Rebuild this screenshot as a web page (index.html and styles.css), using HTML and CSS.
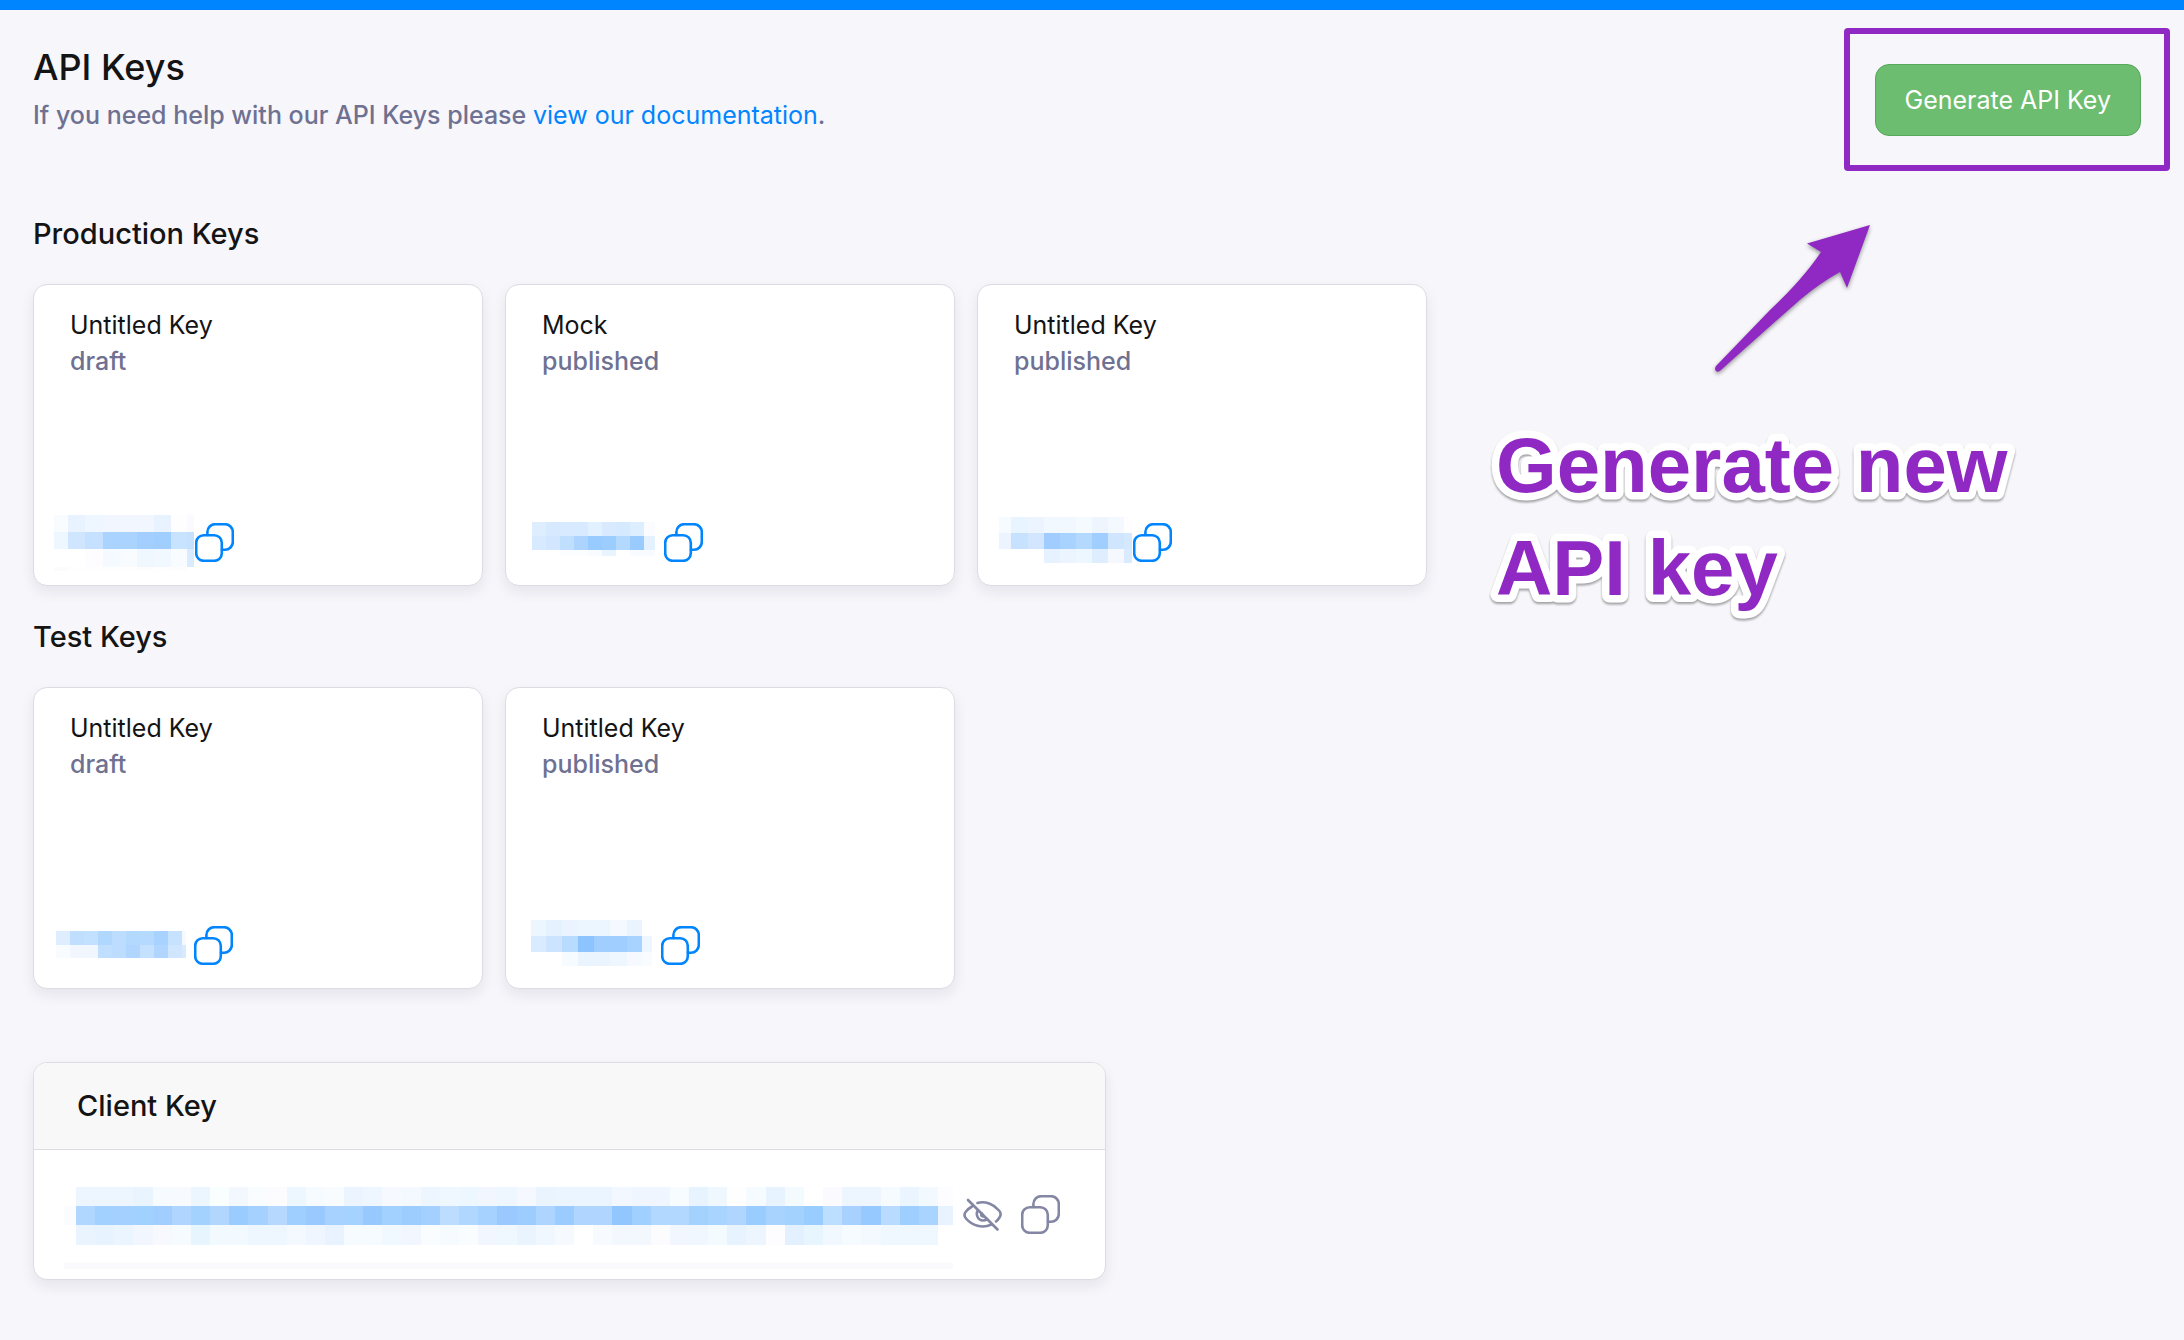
FILE: index.html
```html
<!DOCTYPE html>
<html lang="en">
<head>
    <meta charset="UTF-8">
    <meta name="viewport" content="width=device-width, initial-scale=1.0">
    <title>API Keys</title>
    <link rel="stylesheet" href="styles.css">
</head>
<body>
    <!-- copy icon, used by every key -->
    <svg class="sprite" aria-hidden="true">
        <symbol id="copy" viewBox="0 0 39 39">
            <rect x="1.2" y="12.2" width="25.6" height="25.6" rx="7.5"/>
            <path d="M12.4 12V9a7.8 7.8 0 0 1 7.8-7.8H30A7.8 7.8 0 0 1 37.8 9v10a7.8 7.8 0 0 1-7.8 7.8h-3"/>
        </symbol>
    </svg>

    <main class="page">
        <header class="header">
            <div>
                <h1>API Keys</h1>
                <p class="help">If you need help with our API Keys please <a href="#">view our documentation</a>.</p>
            </div>
            <div class="generate">
                <button class="btn" type="button">Generate API Key</button>
                <svg class="arrow" viewBox="0 0 190 175" aria-hidden="true">
                    <path d="M170 15L107 33.500L121 42Q103 69 70 100L16 156Q14 159 16 161Q18 163 21 160Q77 110 101 89Q120 73 140 62L147 78Z"/>
                </svg>
                <svg class="callout" viewBox="0 0 540 220">
                    <text x="12" y="82">Generate new</text>
                    <text x="12" y="185">API key</text>
                </svg>
            </div>
        </header>

        <h2>Production Keys</h2>
        <div class="cards">
            <div class="card">
                <div>
                    <h3>Untitled Key</h3>
                    <p>draft</p>
                </div>
                <div class="key">
                    <svg class="mask" data-key="prod1" width="145" height="65" role="img" aria-label="Hidden key"></svg>
                    <button class="icon" type="button" aria-label="Copy key"><svg><use href="#copy"/></svg></button>
                </div>
            </div>
            <div class="card">
                <div>
                    <h3>Mock</h3>
                    <p>published</p>
                </div>
                <div class="key">
                    <svg class="mask" data-key="prod2" width="142" height="65" role="img" aria-label="Hidden key"></svg>
                    <button class="icon" type="button" aria-label="Copy key"><svg><use href="#copy"/></svg></button>
                </div>
            </div>
            <div class="card">
                <div>
                    <h3>Untitled Key</h3>
                    <p>published</p>
                </div>
                <div class="key">
                    <svg class="mask" data-key="prod3" width="139" height="65" role="img" aria-label="Hidden key"></svg>
                    <button class="icon" type="button" aria-label="Copy key"><svg><use href="#copy"/></svg></button>
                </div>
            </div>
        </div>

        <h2>Test Keys</h2>
        <div class="cards">
            <div class="card">
                <div>
                    <h3>Untitled Key</h3>
                    <p>draft</p>
                </div>
                <div class="key">
                    <svg class="mask" data-key="test1" width="144" height="65" role="img" aria-label="Hidden key"></svg>
                    <button class="icon" type="button" aria-label="Copy key"><svg><use href="#copy"/></svg></button>
                </div>
            </div>
            <div class="card">
                <div>
                    <h3>Untitled Key</h3>
                    <p>published</p>
                </div>
                <div class="key">
                    <svg class="mask" data-key="test2" width="139" height="65" role="img" aria-label="Hidden key"></svg>
                    <button class="icon" type="button" aria-label="Copy key"><svg><use href="#copy"/></svg></button>
                </div>
            </div>
        </div>

        <section class="client">
            <h2>Client Key</h2>
            <div class="client-body">
                <svg class="mask" data-key="client" width="889" height="109" role="img" aria-label="Hidden client key"></svg>
                <button class="icon eye" type="button" aria-label="Show client key">
                    <svg viewBox="0 0 39 39">
                        <path d="M5 5L34.500 34.500"/>
                        <path d="M14.500 8C22 5.500 31 9.500 36 15.500Q39 19 36.500 22.500Q35 25 33 26.500"/>
                        <path d="M9 11.500Q5.500 13.500 3 16.500Q0 20 3 23.500C9 30.500 19 34 28.500 29.500"/>
                        <path d="M14.800 15.500C12.500 19 14.500 25.500 20 25.500Q22.500 25.500 24 24"/>
                        <path d="M19 18.500Q17 20.500 20 21.500"/>
                    </svg>
                </button>
                <button class="icon" type="button" aria-label="Copy client key"><svg><use href="#copy"/></svg></button>
            </div>
        </section>
    </main>

    <script>
        // x and y are the edges of the blocks, one line of colors for each row
        let clientX = [0];
        for(let i = 0; i <= 45; i++){
            clientX.push(Math.round(12 + i * 862 / 45));
        }
        clientX.push(889);

        const masks = {
            prod1: {
                x: [4,18,35,53,70,87,104,121,137,144],
                y: [5,22,39,57,61],
                rows: [
                    'f8fcff e9f2ff eef7ff f2f7ff f2f7ff f2f7ff e8f3ff fefeff fafaff',
                    'eef6ff d0e6ff c5e1ff aad4ff aad4ff a2cfff a0cfff c8e3ff c5e1ff',
                    'ffffff ffffff fdfdff f4faff f8fcff f0f8ff f2f8ff f8fcff d8ebff',
                    'fcfcfc fefefe fefefe fefefe fefefe fdfdfd fefefe fdfdfd ffffff'
                ]
            },
            prod2: {
                x: [10,24,38,52,66,80,94,108,122,133],
                y: [12,26,40,46],
                rows: [
                    'deeeff d6e9ff d8eaff d8eaff e2f1ff daeafe d5e9ff dceeff fafcff',
                    'd8eaff d2e7ff c0dfff acd4ff 98cbff 9ccdff b4d9ff 9acbff e4f1ff',
                    'ffffff ffffff fcfdff fcfdff f8fbff e8f4ff ffffff f8fbff f8fbff'
                ]
            },
            prod3: {
                x: [5,17,34,50,66,82,98,114,130,138],
                y: [7,23,39,53],
                rows: [
                    'f6fbff e8f4ff ecf5ff f2f8ff f2f8ff f5faff eef5ff f4f8ff fefeff',
                    'ecf5ff c6e2ff d2e6ff a0ccff a8d2ff b4d9ff a0ceff d0e6ff d4e8ff',
                    'ffffff ffffff ffffff e6f2ff ecf5ff ecf7ff deeeff f6f8ff d8ebff'
                ]
            },
            test1: {
                x: [6,20,34,48,62,76,90,104,118,132,136],
                y: [18,32,45],
                rows: [
                    'deeeff c0dfff c2e0ff b0d8ff bcddff b4d9ff b6daff a8d2ff c6e2ff f6faff',
                    'f8fcff f2f7ff f2f7ff c0dfff bcddff b0d6ff c4e1ff b0d6ff d0e6ff d8eaff'
                ]
            },
            test2: {
                x: [9,24,40,56,72,88,105,120,130],
                y: [7,23,39,53],
                rows: [
                    'ecf6ff e4f1ff eaf3ff ecf6ff ecf6ff f4f8ff eaf4ff ffffff',
                    'd8ebff cce4ff b8dcff 8cc4ff a0ceff a0ceff a8d2ff eef6ff',
                    'ffffff ffffff f6fbff eaf4ff eaf4ff eef6ff f6f9ff f8fcff'
                ]
            },
            client: {
                x: clientX,
                y: [27,46,65,85],
                rows: [
                    'ffffff edf6ff edf6ff edf6ff e9f4ff f5fbff f7fbff ebf6ff f9feff f3f8ff f9fdff fcfcff edf7ff f6fbff f9fcff ebf4ff eef7ff f6f9ff f4f8ff edf5ff f0f8ff edf7ff f2f6ff eef6ff f6f8ff e9f4ff ebf5ff ebf5ff ebf5ff f3f7ff eff6ff eff6ff f6fcff e7f4ff eff7ff fefefe f6fbff e7f3ff f3fbff ffffff fafaff edf5ff edf5ff f5fbff ebf5ff f2f9ff fdfdff',
                    'fafcff b0d7ff a2d1ff a4d0ff a1d1ff a2cdff b0d6ff a4d2ff b2d7ff 9bccff a4d1ff b6d8ff 9fcfff 99c9ff a7d2ff a6d2ff 97c9ff a2d0ff 9dccff a4d0ff bcddff b0d7ff a6d2ff 99c9ff 9dccff aed5ff 9bccff b0d6ff b0d6ff 92c6ff a0d0ff b3d8ff b3d8ff a4d2ff a9d4ff b0d6ff 99ccff a9d3ff a4d2ff 99ccff bcdfff a8d1ff 95c9ff b8dbff 9fcfff a9d4ff e8f3ff',
                    'ffffff e9f4ff e7f4ff ebf5ff f2f7ff f7f9ff f5fbff e7f5ff f3faff f3faff eef6ff eef6ff f3f9ff eff6ff e9f3ff f5fbff f5fbff f0f9ff f2f7ff f9fdff f5fbff f9fdff f2f7ff f0f8ff e9f4ff f1f7ff f6faff ffffff f7fbff f3f8ff f3f8ff fcfcff f2f7ff f0f7ff f4fbff e7f4ff edf6ff fdfdff e2f0ff e7f5ff f1f8ff f5fbff f3f9ff f0f8ff f0f8ff f0f8ff ffffff'
                ]
            }
        };

        document.querySelectorAll('.mask').forEach(function(svg){
            let mask = masks[svg.dataset.key];
            let html = '';
            mask.rows.forEach(function(row,r){
                row.split(' ').forEach(function(color,c){
                    html += `<rect x="${mask.x[c]}" y="${mask.y[r]}" width="${mask.x[c+1] - mask.x[c]}" height="${mask.y[r+1] - mask.y[r]}" fill="#${color}"/>`;
                })
            })
            if(svg.dataset.key == 'client'){
                html += '<rect x="0" y="103" width="889" height="6" fill="#fafafc"/>';
            }
            svg.innerHTML = html;
        })
    </script>
</body>
</html>
```

FILE: styles.css
```css
*{
    margin: 0;
    padding: 0;
    box-sizing: border-box;
}
body{
    background-color: #f7f6fb;
    border-top: 10px solid #0085ff;
    color: #141414;
    font-family: Inter, "Liberation Sans", sans-serif;
    font-size: 25px;
    line-height: 36px;
}
.sprite{
    display: none;
}
.page{
    padding: 35px 43px 60px 33px;
}
.header{
    display: flex;
    justify-content: space-between;
    align-items: flex-start;
    margin-bottom: 78px;
}
h1{
    font-size: 36px;
    font-weight: 500;
    line-height: 44px;
    margin-bottom: 8px;
}
h2{
    font-size: 29px;
    font-weight: 500;
    line-height: 40px;
}
h3{
    font-size: 25px;
    font-weight: 400;
}
p{
    color: #6e7191;
    font-weight: 500;
}
.help a{
    color: #0085ff;
    font-weight: 400;
    text-decoration: none;
}
.generate{
    position: relative;
    margin-top: 19px;
}
/* purple frame round the button */
.generate::after{
    content: "";
    position: absolute;
    top: -36px;
    right: -29px;
    bottom: -35px;
    left: -31px;
    border: 6px solid #9029c3;
    border-radius: 4px;
    pointer-events: none;
}
.btn{
    display: block;
    height: 72px;
    padding: 0 29px;
    background-color: #6cbd6f;
    border: 1px solid #57a75c;
    border-radius: 14px;
    color: #fff;
    font-family: inherit;
    font-size: 25px;
    font-weight: 400;
}
.arrow{
    position: absolute;
    top: 146px;
    right: 251px;
    width: 190px;
    height: 175px;
    fill: #9029c3;
    filter: drop-shadow(0 2px 2px rgba(0,0,0,.4));
}
.callout{
    position: absolute;
    top: 346px;
    right: 117px;
    width: 540px;
    height: 220px;
    fill: #9029c3;
    stroke: #fff;
    stroke-width: 15px;
    stroke-linejoin: round;
    paint-order: stroke;
    font-family: "Liberation Sans", Arial, sans-serif;
    font-size: 78px;
    font-weight: 700;
    filter: drop-shadow(0 2px 1px rgba(0,0,0,.35));
}
.cards{
    display: grid;
    grid-template-columns: repeat(auto-fill, 450px);
    gap: 22px;
    margin: 30px 0 31px;
}
.card{
    display: flex;
    flex-direction: column;
    justify-content: space-between;
    min-height: 302px;
    padding: 22px 16px 10px;
}
.card, .client{
    background-color: #fff;
    border: 1px solid #dcdce4;
    border-radius: 14px;
    box-shadow: 0 6px 14px rgba(20,20,43,.08);
}
.card h3, .card p{
    padding-left: 20px;
}
.key{
    display: flex;
    align-items: center;
}
.mask{
    display: block;
    shape-rendering: crispEdges;
}
.icon{
    width: 39px;
    height: 39px;
    background: none;
    border: none;
    color: #0085ff;
}
.icon svg{
    display: block;
    width: 39px;
    height: 39px;
    fill: none;
    stroke: currentColor;
    stroke-width: 2.6;
    stroke-linecap: round;
    overflow: visible;
}
.client{
    max-width: 1073px;
    margin-top: 73px;
    overflow: hidden;
}
.client h2{
    padding: 23px 43px;
    background-color: #f8f8f8;
    border-bottom: 1px solid #dcdce4;
}
.client-body{
    display: flex;
    align-items: center;
    padding: 10px 30px;
}
.client-body .icon{
    color: #8487a3;
}
.client-body .eye{
    margin: 0 19px 0 10px;
}
```
